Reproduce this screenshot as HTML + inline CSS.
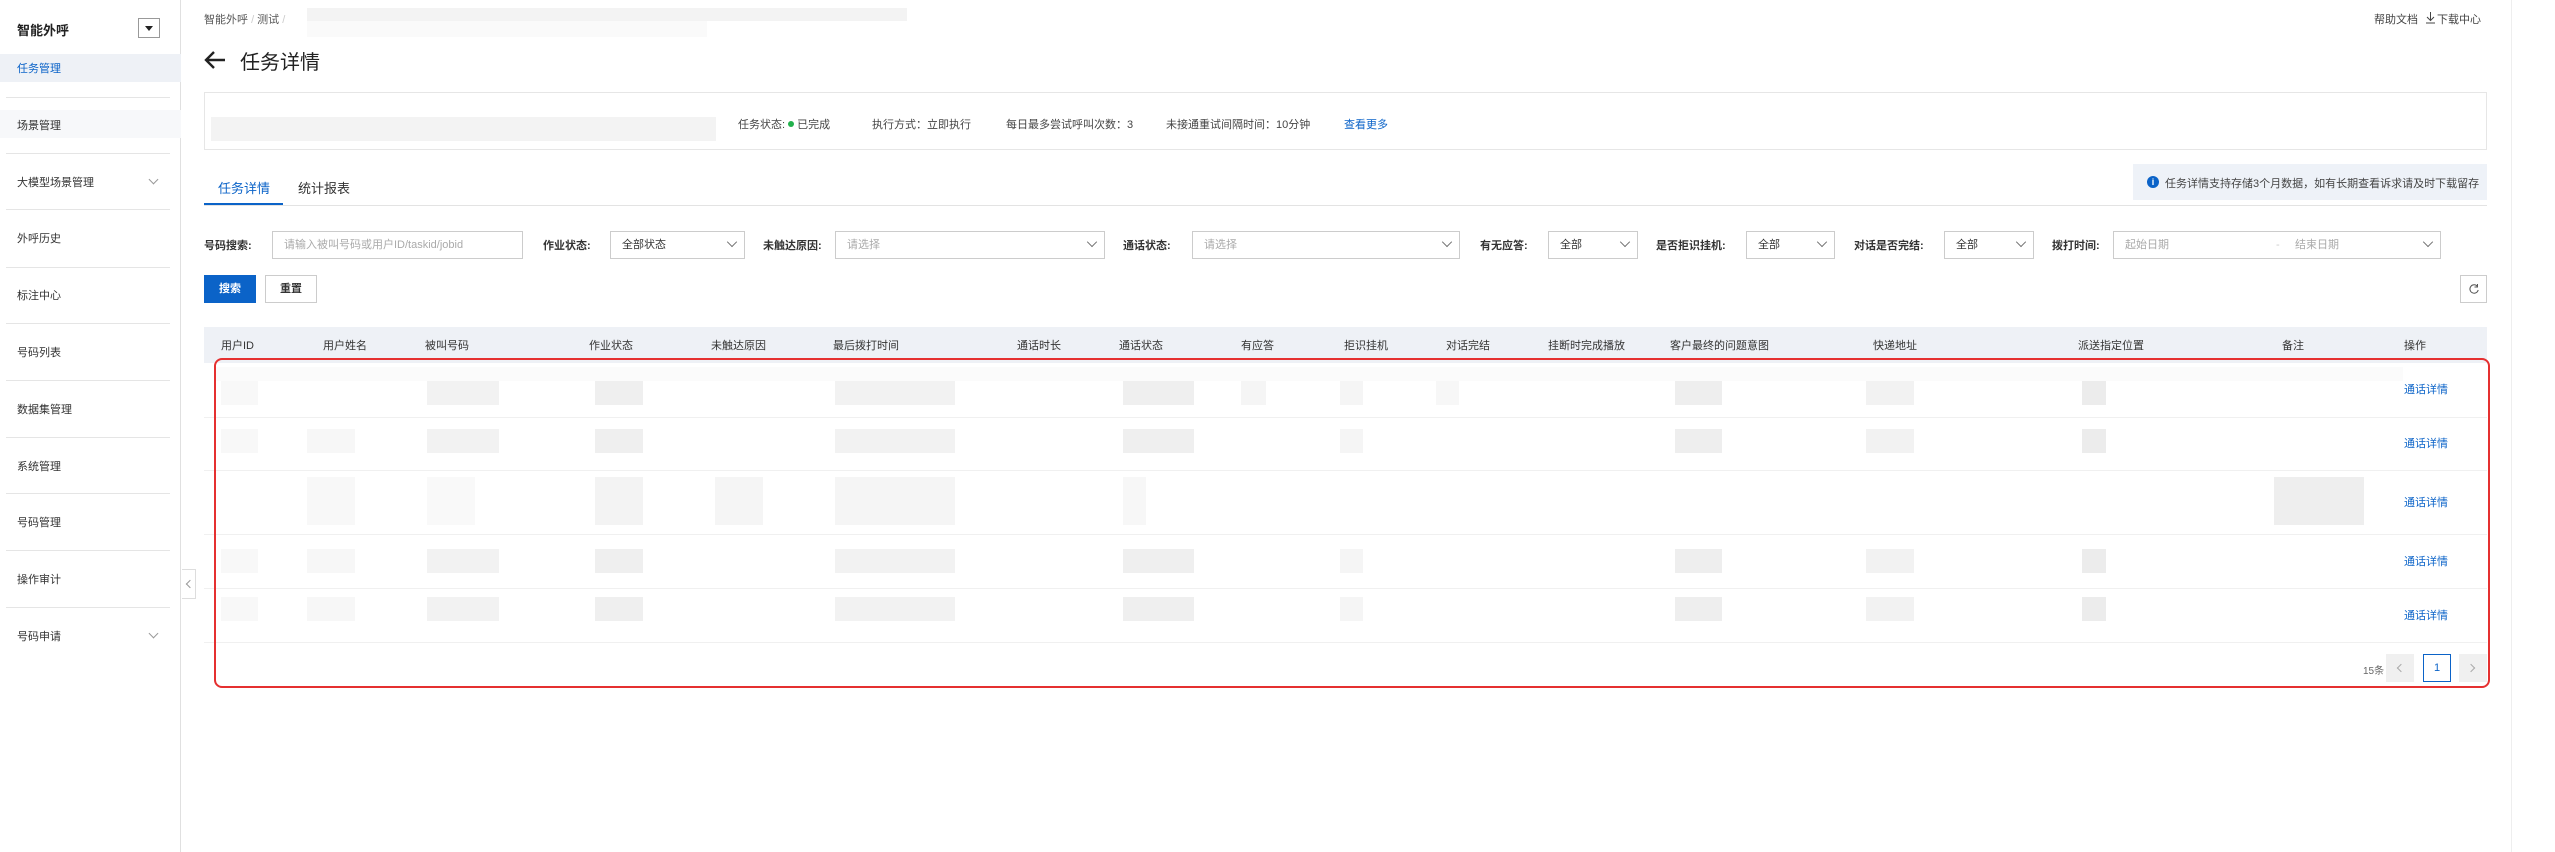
<!DOCTYPE html>
<html><head><meta charset="utf-8"><style>
*{margin:0;padding:0;box-sizing:border-box}
body{width:2555px;height:852px;overflow:hidden;background:#fff;font-family:"Liberation Sans","Noto Sans CJK SC",sans-serif;font-size:11px;color:#333;position:relative}
.a{position:absolute;white-space:nowrap}
.sep{position:absolute;left:6px;width:164px;height:1px;background:#e5e5e5}
.si{position:absolute;left:17px;font-size:11px;color:#333;transform:translateY(-50%)}
.lab{position:absolute;top:245px;transform:translateY(-50%);font-size:11px;color:#333;font-weight:bold}
.box{position:absolute;top:231px;height:28px;border:1px solid #ccc;background:#fff;font-size:11px;color:#333;padding-left:11px;line-height:26px}
.ph{color:#aaa}
.chev{position:absolute;right:8px;top:8px;width:8px;height:8px;border-right:1px solid #666;border-bottom:1px solid #666;transform:rotate(45deg) scale(0.9);top:6px}
.th{position:absolute;top:345px;transform:translateY(-50%);font-size:11px;color:#333}
.bl{position:absolute;background:#f2f2f2}
.rs{position:absolute;left:2404px;font-size:11px;color:#0b63c8;transform:translateY(-50%)}
.rl{position:absolute;left:204px;width:2283px;height:1px;background:#f0f0f0}
</style></head><body>
<!-- sidebar -->
<div class="a" style="left:0;top:0;width:181px;height:852px;border-right:1px solid #e0e0e0;background:#fff"></div>
<div class="a" style="left:17px;top:20px;font-size:13px;font-weight:bold;color:#222">智能外呼</div>
<div class="a" style="left:138px;top:18px;width:22px;height:20px;border:1px solid #999;background:#fff"><div style="position:absolute;left:6px;top:7px;border-left:4px solid transparent;border-right:4px solid transparent;border-top:5px solid #222"></div></div>
<div class="a" style="left:0;top:54px;width:181px;height:28px;background:#eef1f6"></div>
<div class="a" style="left:0;top:110px;width:181px;height:28px;background:#f7f8fa"></div>
<div class="si" style="top:68px;color:#0b63c8">任务管理</div>
<div class="sep" style="top:97px"></div>
<div class="si" style="top:125px">场景管理</div>
<div class="sep" style="top:153px"></div>
<div class="si" style="top:182px">大模型场景管理</div>
<div class="a" style="left:150px;top:176px;width:7px;height:7px;border-right:1px solid #999;border-bottom:1px solid #999;transform:rotate(45deg)"></div>
<div class="sep" style="top:209px"></div>
<div class="si" style="top:238px">外呼历史</div>
<div class="sep" style="top:267px"></div>
<div class="si" style="top:295px">标注中心</div>
<div class="sep" style="top:323px"></div>
<div class="si" style="top:352px">号码列表</div>
<div class="sep" style="top:380px"></div>
<div class="si" style="top:409px">数据集管理</div>
<div class="sep" style="top:437px"></div>
<div class="si" style="top:466px">系统管理</div>
<div class="sep" style="top:493px"></div>
<div class="si" style="top:522px">号码管理</div>
<div class="sep" style="top:550px"></div>
<div class="si" style="top:579px">操作审计</div>
<div class="sep" style="top:607px"></div>
<div class="si" style="top:636px">号码申请</div>
<div class="a" style="left:150px;top:630px;width:7px;height:7px;border-right:1px solid #999;border-bottom:1px solid #999;transform:rotate(45deg)"></div>
<div class="a" style="left:182px;top:569px;width:14px;height:30px;border:1px solid #ddd;border-left:none;background:#fff"><div style="position:absolute;left:5px;top:11px;width:6px;height:6px;border-left:1px solid #999;border-bottom:1px solid #999;transform:rotate(45deg)"></div></div>
<!-- right line -->
<div class="a" style="left:2511px;top:0;width:1px;height:852px;background:#eee"></div>
<!-- breadcrumb -->
<div class="a" style="left:204px;top:11px;font-size:11px;color:#555">智能外呼 <span style="color:#ccc">/</span> 测试 <span style="color:#ccc">/</span></div>
<div class="a" style="left:307px;top:8px;width:600px;height:13px;background:#f3f3f3"></div>
<div class="a" style="left:307px;top:21px;width:400px;height:16px;background:#fafafa"></div>
<div class="a" style="left:2374px;top:11px;font-size:11px;color:#444">帮助文档</div>
<svg class="a" style="left:2425px;top:11px" width="11" height="13" viewBox="0 0 11 13"><path d="M5.5 1v8M2 6l3.5 3.5L9 6M1 12h9" fill="none" stroke="#444" stroke-width="1"/></svg>
<div class="a" style="left:2437px;top:11px;font-size:11px;color:#444">下载中心</div>
<!-- title -->
<svg class="a" style="left:204px;top:50px" width="22" height="20" viewBox="0 0 22 20"><path d="M21 10H3M10 2L2 10l8 8" fill="none" stroke="#222" stroke-width="2.4"/></svg>
<div class="a" style="left:240px;top:46px;font-size:20px;color:#222">任务详情</div>
<!-- info card -->
<div class="a" style="left:204px;top:92px;width:2283px;height:58px;border:1px solid #e6e6e6"></div>
<div class="a" style="left:211px;top:117px;width:505px;height:24px;background:#f3f3f3"></div>
<div class="a" style="left:738px;top:116px;font-size:11px;color:#444">任务状态: <span style="display:inline-block;width:6px;height:6px;border-radius:50%;background:#22b14c;vertical-align:1px"></span> 已完成</div>
<div class="a" style="left:872px;top:116px;font-size:11px;color:#444">执行方式：立即执行</div>
<div class="a" style="left:1006px;top:116px;font-size:11px;color:#444">每日最多尝试呼叫次数：3</div>
<div class="a" style="left:1166px;top:116px;font-size:11px;color:#444">未接通重试间隔时间：10分钟</div>
<div class="a" style="left:1344px;top:116px;font-size:11px;color:#0b63c8">查看更多</div>
<!-- tabs -->
<div class="a" style="left:218px;top:178px;font-size:13px;color:#0b63c8">任务详情</div>
<div class="a" style="left:298px;top:178px;font-size:13px;color:#333">统计报表</div>
<div class="a" style="left:204px;top:205px;width:2283px;height:1px;background:#e3e3e3"></div>
<div class="a" style="left:204px;top:203px;width:79px;height:2px;background:#0b63c8"></div>
<div class="a" style="left:2133px;top:164px;width:354px;height:36px;background:#eef2f8"></div>
<div class="a" style="left:2147px;top:176px;width:12px;height:12px;border-radius:50%;background:#0b63c8;color:#fff;font-size:9px;font-weight:bold;text-align:center;line-height:12px">i</div>
<div class="a" style="left:2165px;top:175px;font-size:11px;color:#444">任务详情支持存储3个月数据，如有长期查看诉求请及时下载留存</div>
<!-- filters -->
<div class="lab" style="left:204px">号码搜索:</div>
<div class="box ph" style="left:272px;width:251px">请输入被叫号码或用户ID/taskid/jobid</div>
<div class="lab" style="left:543px">作业状态:</div>
<div class="box" style="left:610px;width:135px">全部状态<i class="chev"></i></div>
<div class="lab" style="left:763px">未触达原因:</div>
<div class="box ph" style="left:835px;width:270px">请选择<i class="chev"></i></div>
<div class="lab" style="left:1123px">通话状态:</div>
<div class="box ph" style="left:1192px;width:268px">请选择<i class="chev"></i></div>
<div class="lab" style="left:1480px">有无应答:</div>
<div class="box" style="left:1548px;width:90px">全部<i class="chev"></i></div>
<div class="lab" style="left:1656px">是否拒识挂机:</div>
<div class="box" style="left:1746px;width:89px">全部<i class="chev"></i></div>
<div class="lab" style="left:1854px">对话是否完结:</div>
<div class="box" style="left:1944px;width:90px">全部<i class="chev"></i></div>
<div class="lab" style="left:2052px">拨打时间:</div>
<div class="box ph" style="left:2113px;width:328px">起始日期<span style="position:absolute;left:162px;color:#ccc">-</span><span style="position:absolute;left:181px">结束日期</span><i class="chev"></i></div>
<div class="a" style="left:204px;top:275px;width:52px;height:28px;background:#0b63c8;color:#fff;font-size:11px;font-weight:bold;text-align:center;line-height:28px">搜索</div>
<div class="a" style="left:265px;top:275px;width:52px;height:28px;border:1px solid #ccc;color:#333;font-size:11px;font-weight:bold;text-align:center;line-height:26px">重置</div>
<div class="a" style="left:2460px;top:275px;width:27px;height:28px;border:1px solid #ccc"><svg style="position:absolute;left:7px;top:7px" width="12" height="12" viewBox="0 0 12 12"><path d="M9.5 3.5A4.2 4.2 0 1 0 10.2 7" fill="none" stroke="#555" stroke-width="1"/><path d="M9.5 1v3h-3" fill="none" stroke="#555" stroke-width="1"/></svg></div>
<!-- table -->
<div class="a" style="left:204px;top:327px;width:2283px;height:36px;background:#eef1f6"></div>
<div class="th" style="left:221px">用户ID</div>
<div class="th" style="left:323px">用户姓名</div>
<div class="th" style="left:425px">被叫号码</div>
<div class="th" style="left:589px">作业状态</div>
<div class="th" style="left:711px">未触达原因</div>
<div class="th" style="left:833px">最后拨打时间</div>
<div class="th" style="left:1017px">通话时长</div>
<div class="th" style="left:1119px">通话状态</div>
<div class="th" style="left:1241px">有应答</div>
<div class="th" style="left:1344px">拒识挂机</div>
<div class="th" style="left:1446px">对话完结</div>
<div class="th" style="left:1548px">挂断时完成播放</div>
<div class="th" style="left:1670px">客户最终的问题意图</div>
<div class="th" style="left:1873px">快递地址</div>
<div class="th" style="left:2078px">派送指定位置</div>
<div class="th" style="left:2282px">备注</div>
<div class="th" style="left:2404px">操作</div>
<div class="rl" style="top:417px"></div><div class="rl" style="top:470px"></div><div class="rl" style="top:534px"></div><div class="rl" style="top:588px"></div><div class="rl" style="top:642px"></div>
<div class="a" style="left:216px;top:367px;width:2187px;height:14px;background:#fbfbfb"></div>
<!-- blocks rows -->
<div style="position:absolute;left:0;top:381px">
<div class="bl" style="left:221px;width:37px;height:24px;background:#f8f8f8"></div><div class="bl" style="left:427px;width:72px;height:24px"></div><div class="bl" style="left:595px;width:48px;height:24px;background:#efefef"></div><div class="bl" style="left:835px;width:120px;height:24px"></div><div class="bl" style="left:1123px;width:71px;height:24px;background:#efefef"></div><div class="bl" style="left:1241px;width:25px;height:24px;background:#f5f5f5"></div><div class="bl" style="left:1340px;width:23px;height:24px;background:#f5f5f5"></div><div class="bl" style="left:1436px;width:23px;height:24px;background:#f7f7f7"></div><div class="bl" style="left:1675px;width:47px;height:24px;background:#eeeeee"></div><div class="bl" style="left:1866px;width:48px;height:24px"></div><div class="bl" style="left:2082px;width:24px;height:24px;background:#ececec"></div></div>
<div style="position:absolute;left:0;top:429px">
<div class="bl" style="left:221px;width:37px;height:24px;background:#f8f8f8"></div><div class="bl" style="left:307px;width:48px;height:24px;background:#f7f7f7"></div><div class="bl" style="left:427px;width:72px;height:24px"></div><div class="bl" style="left:595px;width:48px;height:24px;background:#efefef"></div><div class="bl" style="left:835px;width:120px;height:24px"></div><div class="bl" style="left:1123px;width:71px;height:24px;background:#efefef"></div><div class="bl" style="left:1340px;width:23px;height:24px;background:#f5f5f5"></div><div class="bl" style="left:1675px;width:47px;height:24px;background:#eeeeee"></div><div class="bl" style="left:1866px;width:48px;height:24px"></div><div class="bl" style="left:2082px;width:24px;height:24px;background:#ececec"></div></div>
<div style="position:absolute;left:0;top:477px">
<div class="bl" style="left:307px;width:48px;height:48px;background:#f8f8f8"></div><div class="bl" style="left:427px;width:48px;height:48px;background:#f9f9f9"></div><div class="bl" style="left:595px;width:48px;height:48px;background:#f3f3f3"></div><div class="bl" style="left:715px;width:48px;height:48px;background:#f5f5f5"></div><div class="bl" style="left:835px;width:120px;height:48px;background:#f5f5f5"></div><div class="bl" style="left:1123px;width:23px;height:48px;background:#f7f7f7"></div><div class="bl" style="left:2274px;width:90px;height:48px;background:#eeeeee"></div></div>
<div style="position:absolute;left:0;top:549px">
<div class="bl" style="left:221px;width:37px;height:24px;background:#f8f8f8"></div><div class="bl" style="left:307px;width:48px;height:24px;background:#f7f7f7"></div><div class="bl" style="left:427px;width:72px;height:24px"></div><div class="bl" style="left:595px;width:48px;height:24px;background:#efefef"></div><div class="bl" style="left:835px;width:120px;height:24px"></div><div class="bl" style="left:1123px;width:71px;height:24px;background:#efefef"></div><div class="bl" style="left:1340px;width:23px;height:24px;background:#f5f5f5"></div><div class="bl" style="left:1675px;width:47px;height:24px;background:#eeeeee"></div><div class="bl" style="left:1866px;width:48px;height:24px"></div><div class="bl" style="left:2082px;width:24px;height:24px;background:#ececec"></div></div>
<div style="position:absolute;left:0;top:597px">
<div class="bl" style="left:221px;width:37px;height:24px;background:#f8f8f8"></div><div class="bl" style="left:307px;width:48px;height:24px;background:#f7f7f7"></div><div class="bl" style="left:427px;width:72px;height:24px"></div><div class="bl" style="left:595px;width:48px;height:24px;background:#efefef"></div><div class="bl" style="left:835px;width:120px;height:24px"></div><div class="bl" style="left:1123px;width:71px;height:24px;background:#efefef"></div><div class="bl" style="left:1340px;width:23px;height:24px;background:#f5f5f5"></div><div class="bl" style="left:1675px;width:47px;height:24px;background:#eeeeee"></div><div class="bl" style="left:1866px;width:48px;height:24px"></div><div class="bl" style="left:2082px;width:24px;height:24px;background:#ececec"></div></div>
<div class="rs" style="top:389px">通话详情</div>
<div class="rs" style="top:443px">通话详情</div>
<div class="rs" style="top:502px">通话详情</div>
<div class="rs" style="top:561px">通话详情</div>
<div class="rs" style="top:615px">通话详情</div>
<!-- pagination -->
<div class="a" style="left:2363px;top:662px;font-size:10px;color:#666">15条</div>
<div class="a" style="left:2386px;top:654px;width:28px;height:28px;background:#f0f0f0"><div style="position:absolute;left:12px;top:11px;width:6px;height:6px;border-left:1px solid #aaa;border-bottom:1px solid #aaa;transform:rotate(45deg)"></div></div>
<div class="a" style="left:2423px;top:654px;width:28px;height:28px;border:1px solid #0b63c8;color:#0b63c8;font-size:11px;text-align:center;line-height:26px">1</div>
<div class="a" style="left:2459px;top:654px;width:28px;height:28px;background:#f0f0f0"><div style="position:absolute;left:9px;top:11px;width:6px;height:6px;border-right:1px solid #aaa;border-top:1px solid #aaa;transform:rotate(45deg)"></div></div>
<!-- red outline -->
<div class="a" style="left:214px;top:358px;width:2276px;height:330px;border:2px solid #e53030;border-radius:8px"></div>
</body></html>
